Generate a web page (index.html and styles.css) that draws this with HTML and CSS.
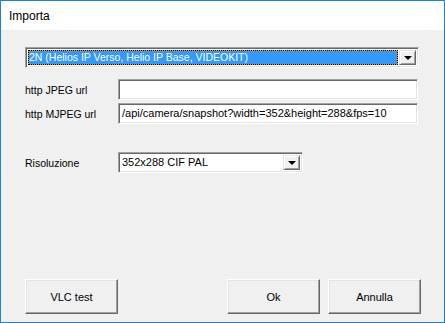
FILE: index.html
```html
<!DOCTYPE html>
<html lang="it">
<head>
    <meta charset="UTF-8">
    <title>Importa</title>
    <link rel="stylesheet" href="styles.css">
</head>
<body>

<div class="window">
    <div class="titlebar">Importa</div>
    <div class="content">
        <div class="combo combo-wide">
            <div class="combo-value selected"><span>2N (Helios IP Verso, Helio IP Base, VIDEOKIT)</span></div>
            <div class="combo-btn"><span class="arrow"></span></div>
        </div>

        <div class="fields">
            <div class="row">
                <label>http JPEG url</label>
                <div class="field"></div>
            </div>
            <div class="row">
                <label>http MJPEG url</label>
                <div class="field">/api/camera/snapshot?width=352&amp;height=288&amp;fps=10</div>
            </div>
        </div>

        <div class="row res-row">
            <label>Risoluzione</label>
            <div class="combo combo-small">
                <div class="combo-value">352x288 CIF PAL</div>
                <div class="combo-btn"><span class="arrow"></span></div>
            </div>
        </div>

        <div class="buttons">
            <button class="btn">VLC test</button>
            <div class="spacer"></div>
            <button class="btn">Ok</button>
            <button class="btn">Annulla</button>
        </div>
    </div>
</div>

</body>
</html>
```

FILE: styles.css
```css
body {
    margin: 0;
    font-family: "Liberation Sans", Arial, sans-serif;
    font-size: 11px;
    color: #000;
    background: #fff;
}
.window {
    width: 445px;
    height: 323px;
    box-sizing: border-box;
    border: 1px solid #1883d7;
    display: flex;
    flex-direction: column;
}
.titlebar {
    height: 29px;
    line-height: 31px;
    padding-left: 8px;
    background: #fff;
    font-size: 12px;
}
.content {
    flex: 1;
    background: #f0f0f0;
    padding: 17px 23px 0 24px;
    display: flex;
    flex-direction: column;
}
.combo {
    display: flex;
    background: #fff;
    border: 1px solid;
    border-color: #a0a0a0 #fff #fff #a0a0a0;
    box-shadow: inset 1px 1px 0 #696969, inset -1px -1px 0 #e3e3e3;
    padding: 2px;
    box-sizing: border-box;
}
.combo-wide {
    width: 394px;
    height: 21px;
}
.combo-small {
    width: 185px;
    height: 21px;
}
.combo-value {
    flex: 1;
    line-height: 15px;
    padding-left: 1px;
    white-space: nowrap;
    overflow: hidden;
}
.selected {
    color: #fff;
    font-size: 10.5px;
    border: 1px dotted #000;
    background: linear-gradient(#3399ff, #3399ff) padding-box, #e8951e border-box;
    line-height: 13px;
    padding-left: 0;
    margin-right: 1px;
}
.combo-btn {
    width: 17px;
    background: #f0f0f0;
    border: 1px solid;
    border-color: #e3e3e3 #696969 #696969 #e3e3e3;
    box-shadow: inset 1px 1px 0 #fff, inset -1px -1px 0 #a0a0a0;
    box-sizing: border-box;
    display: flex;
    align-items: center;
    justify-content: center;
}
.arrow {
    width: 0;
    height: 0;
    border-left: 4px solid transparent;
    border-right: 4px solid transparent;
    border-top: 4px solid #000;
    margin-top: 1px;
}
.fields {
    margin-top: 11px;
    display: flex;
    flex-direction: column;
    gap: 3px;
}
.row {
    display: flex;
    align-items: center;
}
.row label {
    width: 93px;
    font-size: 10.5px;
}
.field {
    width: 300px;
    height: 21px;
    box-sizing: border-box;
    background: #fff;
    border: 1px solid;
    border-color: #a0a0a0 #fff #fff #a0a0a0;
    box-shadow: inset 1px 1px 0 #696969, inset -1px -1px 0 #e3e3e3;
    padding-left: 3px;
    line-height: 19px;
    white-space: nowrap;
    overflow: hidden;
}
.res-row {
    margin-top: 28px;
}
.buttons {
    margin-top: auto;
    margin-bottom: 8px;
    display: flex;
    gap: 8px;
}
.spacer {
    flex: 1;
}
.btn {
    width: 93px;
    height: 35px;
    font-family: inherit;
    font-size: 11px;
    color: #000;
    background: #f0f0f0;
    border: 1px solid;
    border-color: #fff #696969 #696969 #fff;
    box-shadow: inset -1px -1px 0 #a0a0a0, inset 1px 1px 0 #e3e3e3;
    padding: 0;
}
```
